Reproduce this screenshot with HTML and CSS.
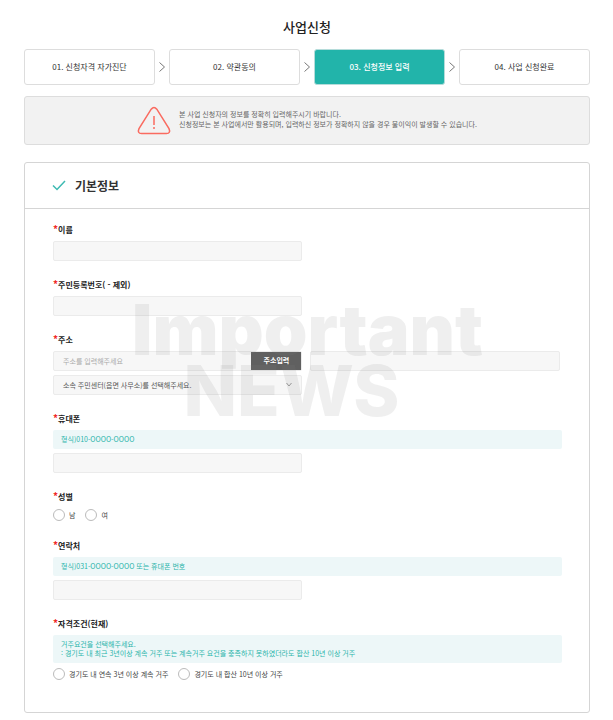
FILE: index.html
```html
<!DOCTYPE html>
<html lang="ko">

<head>
  <meta charset="UTF-8">
  <meta name="viewport" content="width=device-width, initial-scale=1.0">
  <title>사업신청</title>
  <link rel="stylesheet" href="styles.css">
</head>

<body>

  <main class="page">
    <h1>사업신청</h1>

    <!-- Steps -->
    <ol class="steps">
      <li class="step">01. 신청자격 자가진단</li>
      <li class="arrow"><svg viewBox="0 0 6 10"><path d="M.5 .5L5.500 5l-5 4.500"/></svg></li>
      <li class="step">02. 약관동의</li>
      <li class="arrow"><svg viewBox="0 0 6 10"><path d="M.5 .5L5.500 5l-5 4.500"/></svg></li>
      <li class="step active" aria-current="step">03. 신청정보 입력</li>
      <li class="arrow"><svg viewBox="0 0 6 10"><path d="M.5 .5L5.500 5l-5 4.500"/></svg></li>
      <li class="step">04. 사업 신청완료</li>
    </ol>

    <div class="notice">
      <svg class="warning" viewBox="0 0 34 30">
        <path d="M14.2 3.2Q17 -.4 19.8 3.2L32 22.6Q34 27.4 29.4 27.6H4.6Q0 27.4 2 22.6Z"/>
        <path class="mark" d="M17 10v9M17 21v2"/>
      </svg>
      <p>본 사업 신청자의 정보를 정확히 입력해주시기 바랍니다.<br>
        신청정보는 본 사업에서만 활용되며, 입력하신 정보가 정확하지 않을 경우 불이익이 발생할 수 있습니다.</p>
    </div>

    <!-- Basic info -->
    <form class="panel">
      <div class="panel-head">
        <svg class="check" viewBox="0 0 14 11"><path d="M1 5.5l4 4L13 1"/></svg>
        <h2>기본정보</h2>
      </div>

      <div class="panel-body">
        <div class="field">
          <label class="label" for="name"><span class="req">*</span>이름</label>
          <input class="input" type="text" id="name">
        </div>

        <div class="field">
          <label class="label" for="jumin"><span class="req">*</span>주민등록번호( - 제외)</label>
          <input class="input" type="text" id="jumin">
        </div>

        <div class="field">
          <label class="label" for="addr"><span class="req">*</span>주소</label>
          <div class="stack">
            <div class="addr-row">
              <div class="addr-search">
                <input class="addr-input" type="text" id="addr" placeholder="주소를 입력해주세요">
                <button class="addr-btn" type="button">주소입력</button>
              </div>
              <input class="input" type="text" id="addr2" aria-label="상세주소">
            </div>
            <div class="select-wrap">
              <select class="input" id="center" aria-label="주민센터">
                <option>소속 주민센터(읍면 사무소)를 선택해주세요.</option>
              </select>
              <svg class="chevron" viewBox="0 0 6 5"><path d="M.5 1L3 4l2.500-3"/></svg>
            </div>
          </div>
          <div class="watermark" aria-hidden="true">
            <span>Important</span>
            <span class="second">NEWS</span>
          </div>
        </div>

        <div class="field">
          <label class="label" for="phone"><span class="req">*</span>휴대폰</label>
          <div class="stack">
            <p class="hint">형식)010-OOOO-OOOO</p>
            <input class="input" type="tel" id="phone">
          </div>
        </div>

        <fieldset class="field">
          <legend class="label"><span class="req">*</span>성별</legend>
          <div class="radios">
            <label><input type="radio" name="gender">남</label>
            <label><input type="radio" name="gender">여</label>
          </div>
        </fieldset>

        <div class="field">
          <label class="label" for="tel"><span class="req">*</span>연락처</label>
          <div class="stack">
            <p class="hint">형식)031-OOOO-OOOO 또는 휴대폰 번호</p>
            <input class="input" type="tel" id="tel">
          </div>
        </div>

        <fieldset class="field">
          <legend class="label"><span class="req">*</span>자격조건(현재)</legend>
          <div class="stack">
            <p class="hint">거주요건을 선택해주세요.<br>: 경기도 내 최근 3년이상 계속 거주 또는 계속거주 요건을 충족하지 못하였더라도 합산 10년 이상 거주</p>
            <div class="radios">
              <label><input type="radio" name="residence">경기도 내 연속 3년 이상 계속 거주</label>
              <label><input type="radio" name="residence">경기도 내 합산 10년 이상 거주</label>
            </div>
          </div>
        </fieldset>
      </div>
    </form>
  </main>

</body>

</html>
```

FILE: styles.css
```css
/* Global Styles */
* {
  margin: 0;
  padding: 0;
  box-sizing: border-box;
  font-family: 'Noto Sans CJK KR', sans-serif;
}

body {
  background: #fff;
  color: #333;
  font-size: 7px;
}

svg {
  fill: none;
  display: block;
}

.page {
  padding: 18px 23px 7px 24px;
}

h1 {
  text-align: center;
  font-size: 13px;
  line-height: 18px;
  font-weight: 500;
  color: #222;
  margin-bottom: 13px;
}

/* Steps */
.steps {
  display: flex;
  list-style: none;
  margin-bottom: 11px;
}

.step {
  flex: 1;
  height: 36px;
  line-height: 34px;
  text-align: center;
  font-size: 8px;
  border: 1px solid #ddd;
  border-radius: 3px;
}

.step.active {
  background: #22b4aa;
  border-color: #b5dcda;
  color: #fff;
  font-weight: 500;
}

.arrow {
  width: 14px;
  display: flex;
  align-items: center;
  justify-content: center;
}

.arrow svg {
  width: 6px;
  height: 10px;
  stroke: #777;
}

/* Notice */
.notice {
  display: flex;
  align-items: center;
  justify-content: center;
  gap: 8px;
  min-height: 49px;
  margin-bottom: 17px;
  background: #f2f2f2;
  border: 1px solid #ddd;
  border-radius: 3px;
}

.notice p {
  padding-bottom: 3px;
  font-size: 7px;
  line-height: 10px;
  color: #666;
}

.warning {
  width: 34px;
  height: 30px;
  stroke: #fa6b60;
  stroke-width: 1.500;
}

/* Form panel */
.panel {
  border: 1px solid #d5d5d5;
  border-radius: 3px;
}

.panel-head {
  display: flex;
  align-items: center;
  gap: 9px;
  height: 46px;
  padding-left: 27px;
  border-bottom: 1px solid #d5d5d5;
}

.panel-head h2 {
  font-size: 12px;
  line-height: 18px;
  font-weight: 700;
}

.check {
  width: 14px;
  height: 11px;
  stroke: #3dbab2;
  stroke-width: 1.500;
}

.panel-body {
  display: flex;
  flex-direction: column;
  gap: 18px;
  padding: 15px 27px 31px 28px;
}

.field {
  position: relative;
  border: none;
  min-width: 0;
}

.label {
  display: block;
  font-size: 8px;
  line-height: 12px;
  font-weight: 700;
  color: #222;
  margin-bottom: 5px;
}

.req {
  color: #f02828;
  font-size: 10px;
  line-height: 8px;
}

.input,
.addr-search {
  display: block;
  width: 49%;
  height: 20px;
  background: #f7f7f7;
  border: 1px solid #ebebeb;
  border-radius: 2px;
}

.stack {
  display: flex;
  flex-direction: column;
  gap: 4px;
}

/* Address */
.addr-row {
  display: flex;
  gap: 8px;
}

.addr-search {
  display: flex;
}

.addr-input {
  flex: 1;
  min-width: 0;
  padding-left: 9px;
  font-size: 7px;
  background: none;
  border: none;
}

.addr-input::placeholder {
  color: #aaa;
}

.addr-btn {
  width: 50px;
  padding-bottom: 2px;
  font-size: 7px;
  line-height: 16px;
  font-weight: 700;
  color: #fff;
  background: #606060;
  border: none;
}

.select-wrap {
  position: relative;
  width: 49%;
}

.select-wrap .input {
  width: 100%;
  padding-left: 9px;
  font-size: 7px;
  color: #555;
  appearance: none;
}

.chevron {
  position: absolute;
  right: 10px;
  top: 7px;
  width: 6px;
  height: 5px;
  stroke: #999;
}

/* Hints and radios */
.hint {
  padding: 5px 8px;
  font-size: 7px;
  line-height: 9px;
  color: #2bb5ab;
  background: #edf7f8;
  border-radius: 2px;
}

.radios {
  display: flex;
  gap: 10px;
  height: 14px;
}

.radios label {
  display: flex;
  align-items: center;
  gap: 4px;
  font-size: 7px;
  line-height: 12px;
  color: #444;
}

.radios input {
  appearance: none;
  width: 12px;
  height: 12px;
  background: #fff;
  border: 1px solid #bbb;
  border-radius: 50%;
}

/* Watermark */
.watermark {
  position: absolute;
  top: -35px;
  left: 0;
  width: 100%;
  text-align: center;
  color: rgba(130, 130, 130, 0.13);
  pointer-events: none;
}

.watermark span {
  display: block;
  font-family: Inter, sans-serif;
  font-size: 70px;
  line-height: 61px;
  font-weight: 900;
}

.watermark .second {
  padding-right: 32px;
  font-weight: 800;
}
```
